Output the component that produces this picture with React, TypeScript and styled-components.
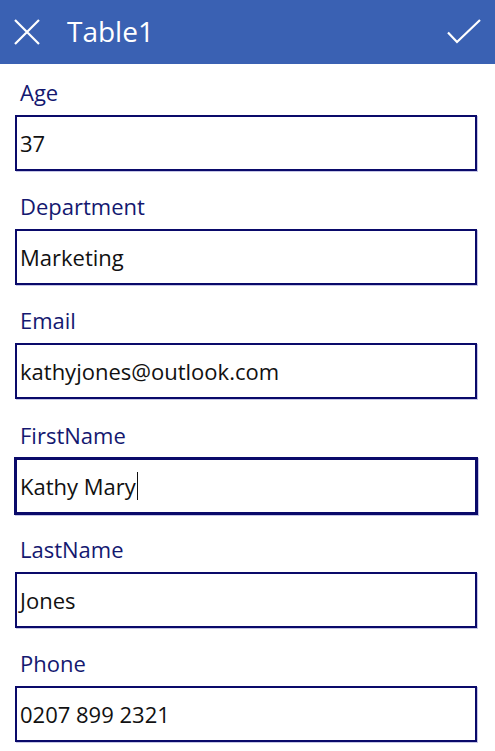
import styled, { createGlobalStyle } from 'styled-components';

const GlobalStyle = createGlobalStyle`
  html, body {
    margin: 0;
    padding: 0;
    background: #ffffff;
  }
  body {
    font-family: "Open Sans", "Noto Sans", sans-serif;
  }
`;

const Screen = styled.div`
  width: 495px;
  min-height: 751px;
  background: #ffffff;
`;

const Header = styled.header`
  height: 64px;
  background: #3a61b3;
  display: flex;
  align-items: center;
  padding: 0 14px;
  box-sizing: border-box;
  color: #ffffff;
`;

const IconButton = styled.span<{ $width: number }>`
  display: flex;
  align-items: center;
  justify-content: center;
  width: ${(p) => p.$width}px;
  height: 34px;
`;

const Title = styled.h1`
  flex: 1;
  margin: 0 0 3px 27px;
  font-size: 28px;
  line-height: 36px;
  font-weight: 400;
`;

const Form = styled.div`
  display: flex;
  flex-direction: column;
`;

const Field = styled.div`
  display: flex;
  flex-direction: column;
  height: 114.2px;
`;

const Label = styled.div`
  height: 51px;
  box-sizing: border-box;
  padding: 14px 0 0 20px;
  font-size: 22px;
  line-height: 28px;
  color: #141870;
`;

const Input = styled.div<{ $focused?: boolean }>`
  height: ${(p) => (p.$focused ? '58px' : '56px')};
  margin: ${(p) => (p.$focused ? '-1px 17px 0 14px' : '0 18px 0 15px')};
  box-sizing: border-box;
  border: ${(p) => (p.$focused ? '3px' : '2px')} solid #0a0a6a;
  box-shadow: 1px 1px 0 #c6c6e6;
  padding-left: 3px;
  display: flex;
  align-items: center;
  font-size: 22px;
  color: #111111;
  white-space: pre;
`;

const Caret = styled.span`
  display: inline-block;
  width: 1px;
  height: 28px;
  margin-left: 1px;
  background: #111111;
`;

const fields = [
  { label: 'Age', value: '37' },
  { label: 'Department', value: 'Marketing' },
  { label: 'Email', value: 'kathyjones@outlook.com' },
  { label: 'FirstName', value: 'Kathy Mary', focused: true },
  { label: 'LastName', value: 'Jones' },
  { label: 'Phone', value: '0207 899 2321' },
];

function CloseIcon() {
  return (
    <svg width="26" height="26" viewBox="0 0 26 26">
      <path d="M1 1 L25 25 M25 1 L1 25" stroke="#fff" strokeWidth="2.2" fill="none" />
    </svg>
  );
}

function CheckIcon() {
  return (
    <svg width="34" height="26" viewBox="0 0 34 26">
      <path d="M1 13.5 L10 23 L33 1" stroke="#fff" strokeWidth="2.2" fill="none" />
    </svg>
  );
}

export default function App() {
  return (
    <Screen>
      <GlobalStyle />
      <Header>
        <IconButton $width={26}>
          <CloseIcon />
        </IconButton>
        <Title>Table1</Title>
        <IconButton $width={34}>
          <CheckIcon />
        </IconButton>
      </Header>
      <Form>
        {fields.map((f) => (
          <Field key={f.label}>
            <Label>{f.label}</Label>
            <Input $focused={f.focused}>
              {f.value}
              {f.focused && <Caret />}
            </Input>
          </Field>
        ))}
      </Form>
    </Screen>
  );
}
